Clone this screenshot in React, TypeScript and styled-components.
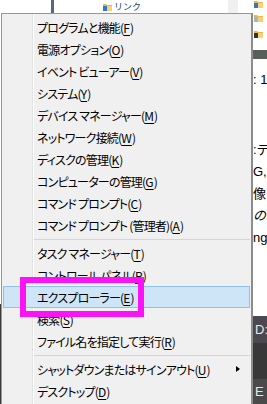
import React from 'react';
import styled, { createGlobalStyle } from 'styled-components';

const GlobalStyle = createGlobalStyle`
  html, body {
    margin: 0;
    padding: 0;
    background: #ffffff;
  }
`;

const Screen = styled.div`
  position: relative;
  width: 267px;
  height: 404px;
  overflow: hidden;
  background: #ffffff;
  font-family: "Noto Sans CJK JP", "Noto Sans", sans-serif;
  display: grid;
  grid-template-columns: 252px 15px;
`;

/* background: the explorer window behind the menu */
const WindowPane = styled.div`
  position: relative;
  display: flex;
  flex-direction: column;
`;

const PaneTop = styled.div`
  height: 13px;
  display: flex;
  align-items: flex-start;
`;

const Splitter = styled.div`
  margin-left: 51px;
  width: 3px;
  height: 13px;
  background: #56687a;
`;

const TreeItem = styled.div`
  margin-left: 49px;
  display: flex;
  align-items: center;
  gap: 2px;
  font-size: 9px;
  color: #1b3d66;
  line-height: 10px;
  margin-top: 2px;
`;

const Scroller = styled.div`
  margin-left: auto;
  margin-right: 14px;
  width: 10px;
  height: 13px;
  background: #f0f0f0;
`;

const EdgeStrip = styled.div`
  margin-top: auto;
  width: 1px;
  height: 100px;
  background: #3a3a3a;
`;

const SideStrip = styled.div`
  display: flex;
  flex-direction: column;
  font-family: "Liberation Sans", "Noto Sans CJK JP", sans-serif;
  font-size: 13px;
  color: #000;
  overflow: hidden;
  white-space: nowrap;
`;

const SideIcon = styled.div<{ $top: number }>`
  margin-top: ${(p) => p.$top}px;
  height: 8px;
  display: flex;
  gap: 2px;
  align-items: center;
  padding-left: 2px;
`;

const DarkBar = styled.div`
  margin-top: 12px;
  height: 9px;
  background: #59605c;
`;

const SideText = styled.div<{ $top: number; $italic?: boolean }>`
  margin-top: ${(p) => p.$top}px;
  height: 22px;
  line-height: 22px;
  padding-left: 1px;
  font-style: ${(p) => (p.$italic ? 'italic' : 'normal')};
`;

const DarkPanel = styled.div`
  margin-top: auto;
  height: 88px;
  display: flex;
  flex-direction: column;
  color: #e8e8e8;
  font-size: 13px;
`;

const DarkRow = styled.div<{ $bg: string; $h: number }>`
  height: ${(p) => p.$h}px;
  line-height: ${(p) => p.$h}px;
  background: ${(p) => p.$bg};
  padding-left: 3px;
  position: relative;
`;

/* the Win+X context menu */
const Menu = styled.div`
  position: absolute;
  left: 1px;
  top: 13px;
  width: 252px;
  box-sizing: border-box;
  border: 1px solid #979797;
  border-right: 2px solid #8c8c8c;
  border-bottom: none;
  background: #f0f0f0;
  padding-top: 2px;
  padding-bottom: 20px;
  font-size: 12px;
  font-feature-settings: "palt";
  color: #000;
`;

const Gutter = styled.div`
  position: absolute;
  left: 30px;
  top: 0;
  bottom: 0;
  width: 1px;
  background: #e2e3e3;
  box-shadow: 1px 0 0 #ffffff;
`;

const Item = styled.div<{ $active?: boolean }>`
  position: relative;
  height: 22px;
  box-sizing: border-box;
  margin: 0 1px;
  padding-left: 33px;
  display: flex;
  align-items: center;
  border: 1px solid ${(p) => (p.$active ? '#8fc1ef' : 'transparent')};
  background: ${(p) => (p.$active ? '#cde5f7' : 'transparent')};
  white-space: nowrap;
  letter-spacing: -0.8px;
`;

const Key = styled.span`
  text-decoration: underline;
  text-underline-offset: 2px;
  letter-spacing: 0;
`;

const Separator = styled.div`
  height: 6px;
  display: flex;
  align-items: center;
  padding-left: 30px;
  padding-right: 1px;

  &::after {
    content: '';
    flex: 1;
    height: 1px;
    background: #d5d5d5;
  }
`;

const SubArrow = styled.span`
  position: absolute;
  right: 9px;
  top: 7px;
  width: 0;
  height: 0;
  border-top: 3.5px solid transparent;
  border-bottom: 3.5px solid transparent;
  border-left: 4px solid #000;
`;

const Callout = styled.div`
  position: absolute;
  left: 20px;
  top: 277px;
  width: 124px;
  height: 40px;
  box-sizing: border-box;
  border: 6px solid #fc12f6;
`;

const Folder = ({ overlay }: { overlay?: string }) => (
  <svg width="9" height="8" viewBox="0 0 9 8">
    <path d="M0 1h3l1 1h5v6H0z" fill="#e8b84a" />
    <path d="M0 3h9v5H0z" fill="#f5d27a" />
    {overlay && <rect x="0" y="3" width="4" height="5" fill={overlay} />}
  </svg>
);

type Entry = { label: string; key: string; active?: boolean; sub?: boolean } | 'sep';

const entries: Entry[] = [
  { label: 'プログラムと機能', key: 'F' },
  { label: '電源オプション', key: 'O' },
  { label: 'イベント ビューアー', key: 'V' },
  { label: 'システム', key: 'Y' },
  { label: 'デバイス マネージャー', key: 'M' },
  { label: 'ネットワーク接続', key: 'W' },
  { label: 'ディスクの管理', key: 'K' },
  { label: 'コンピューターの管理', key: 'G' },
  { label: 'コマンド プロンプト', key: 'C' },
  { label: 'コマンド プロンプト (管理者)', key: 'A' },
  'sep',
  { label: 'タスク マネージャー', key: 'T' },
  { label: 'コントロール パネル', key: 'P' },
  { label: 'エクスプローラー', key: 'E', active: true },
  { label: '検索', key: 'S' },
  { label: 'ファイル名を指定して実行', key: 'R' },
  'sep',
  { label: 'シャットダウンまたはサインアウト', key: 'U', sub: true },
  { label: 'デスクトップ', key: 'D' },
];

const App = () => {
  return (
    <>
      <GlobalStyle />
      <Screen>
        <WindowPane>
          <PaneTop>
            <Splitter />
            <TreeItem>
              <Folder overlay="#2f78c8" />
              リンク
            </TreeItem>
            <Scroller />
          </PaneTop>
          <EdgeStrip />
        </WindowPane>

        <SideStrip>
          <SideIcon $top={0}>
            <Folder overlay="#2f78c8" />
          </SideIcon>
          <SideIcon $top={6}>
            <Folder overlay="#9ab7d8" />
          </SideIcon>
          <SideIcon $top={8}>
            <Folder overlay="#333333" />
          </SideIcon>
          <DarkBar />
          <SideText $top={10}>: 1</SideText>
          <SideText $top={48}>:テ</SideText>
          <SideText $top={0}>G,</SideText>
          <SideText $top={0}>像</SideText>
          <SideText $top={0} $italic>
            の
          </SideText>
          <SideText $top={0}>ng</SideText>
          <DarkPanel>
            <DarkRow $bg="#4b4850" $h={27}>
              D:
            </DarkRow>
            <DarkRow $bg="#383838" $h={36} />
            <DarkRow $bg="#4a4a4a" $h={25}>
              E
            </DarkRow>
          </DarkPanel>
        </SideStrip>

        <Menu>
          <Gutter />
          {entries.map((e, i) =>
            e === 'sep' ? (
              <Separator key={i} />
            ) : (
              <Item key={i} $active={e.active}>
                {e.label}(<Key>{e.key}</Key>)
                {e.sub && <SubArrow />}
              </Item>
            )
          )}
        </Menu>

        <Callout />
      </Screen>
    </>
  );
};

export default App;
